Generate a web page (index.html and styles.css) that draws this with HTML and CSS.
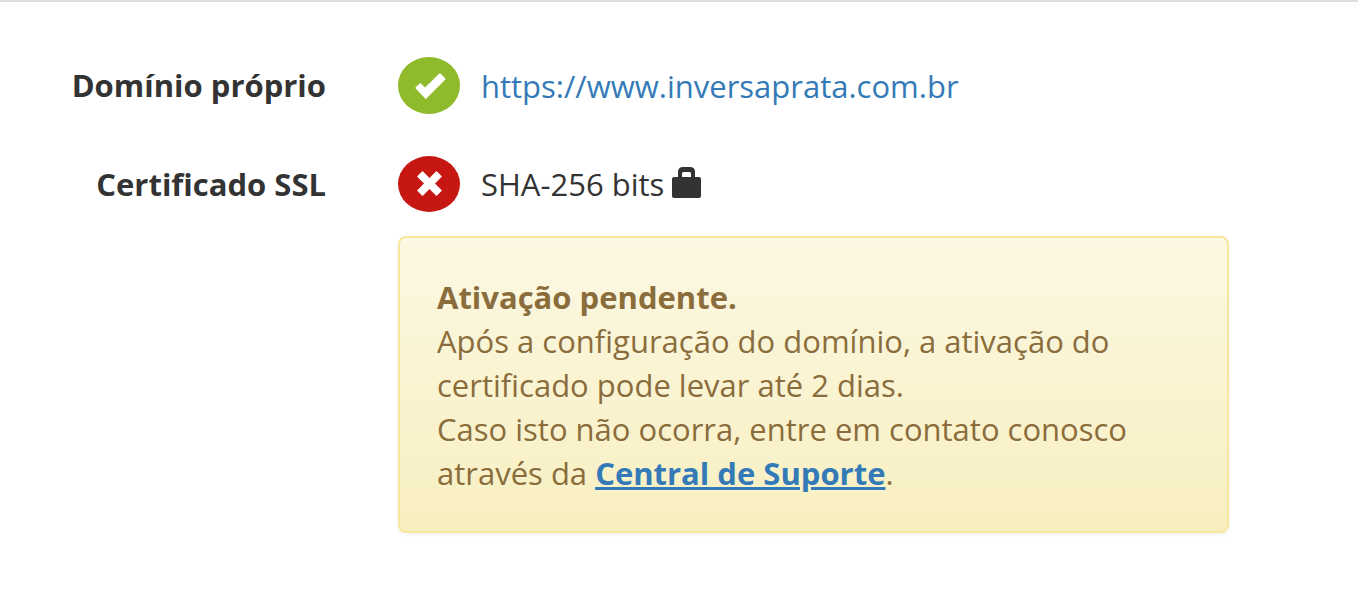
FILE: index.html
```html
<!DOCTYPE html>
<html lang="pt-BR">
<head>
<meta charset="utf-8">
<meta name="viewport" content="width=device-width, initial-scale=1">
<title>Domínio</title>
<link rel="stylesheet" href="styles.css">
</head>
<body>
<main class="panel">
  <dl class="settings">
    <dt class="label">Domínio próprio</dt>
    <dd class="value">
      <div class="status">
        <span class="badge badge-ok">
          <svg class="badge-icon" viewBox="0 0 32 32" aria-hidden="true"><path d="M2.700 18.600q-.6-.7 0-1.300l4-3.900q.7-.5 1.300 0L12 17.500 26.300 3.600q.6-.5 1.200 0l4.900 4.800q.5.600 0 1.200L13.400 28.500q-.6.600-1.200 0z"/></svg>
        </span>
        <a class="link" href="https://www.inversaprata.com.br">https://www.inversaprata.com.br</a>
      </div>
    </dd>
    <dt class="label">Certificado SSL</dt>
    <dd class="value">
      <div class="status">
        <span class="badge badge-error">
          <svg class="badge-icon" viewBox="0 0 32 32" aria-hidden="true"><path d="M8.900 3.500q.6-.5 1.200 0l6.400 6.500 6.400-6.500q.6-.5 1.200 0l4.400 4.400q.5.600 0 1.200L22 15.500l6.500 6.400q.5.600 0 1.200l-4.400 4.400q-.6.500-1.200 0L16.500 21l-6.400 6.500q-.6.500-1.200 0l-4.400-4.400q-.5-.6 0-1.200l6.500-6.400-6.500-6.400q-.5-.6 0-1.200z"/></svg>
        </span>
        <span class="cert">SHA-256 bits
          <svg class="lock" viewBox="0 0 30 32" aria-hidden="true"><path fill-rule="evenodd" d="M6 10V5q0-5 5-5h7q5 0 5 5v5h4q2 0 2 2v17q0 2-2 2H2q-2 0-2-2V12q0-2 2-2zM10 10h9V6.500Q19 5 17.500 5h-6Q10 5 10 6.500z"/></svg>
        </span>
      </div>
      <div class="alert" role="alert">
        <strong>Ativação pendente.</strong><br>
        Após a configuração do domínio, a ativação do certificado pode levar até 2 dias.<br>
        Caso isto não ocorra, entre em contato conosco através da <a class="support" href="#suporte">Central de Suporte</a>.
      </div>
    </dd>
  </dl>
</main>
</body>
</html>
```
FILE: styles.css
```css
* { box-sizing: border-box; }
body {
  margin: 0;
  background: #fff;
  color: #333;
  font: 31px/44px "Open Sans", sans-serif;
}
.panel {
  border-top: 2px solid #ddd;
  padding: 55px 129px 58px 0;
}
.settings {
  display: grid;
  grid-template-columns: 326px 1fr;
  column-gap: 72px;
  row-gap: 42px;
  margin: 0;
}
.label {
  padding-top: 6px;
  text-align: right;
  font-weight: 700;
}
.value { margin: 0; }
.status {
  display: flex;
  align-items: center;
  gap: 21px;
}
.badge {
  display: flex;
  align-items: center;
  justify-content: center;
  width: 62px;
  height: 57px;
  border-radius: 50%;
}
.badge-ok { background: #8fba2b; }
.badge-error { height: 56px; background: #c71712; }
.badge-icon { width: 32px; height: 32px; fill: #fff; overflow: visible; }
.link { color: #337ab7; text-decoration: none; }
.lock { width: 30px; height: 32px; fill: #333; vertical-align: -3px; }
.alert {
  margin-top: 24px;
  padding: 37px 37px 36px;
  border: 2px solid #f5e79e;
  border-radius: 8px;
  background: linear-gradient(#fcf8e3, #f8efc0);
  box-shadow: inset 0 2px 0 rgba(255, 255, 255, .25), 0 2px 4px rgba(0, 0, 0, .05);
  color: #8a6d3b;
  text-shadow: 0 2px 0 rgba(255, 255, 255, .2);
}
.support { color: #337ab7; font-weight: 700; }
```
